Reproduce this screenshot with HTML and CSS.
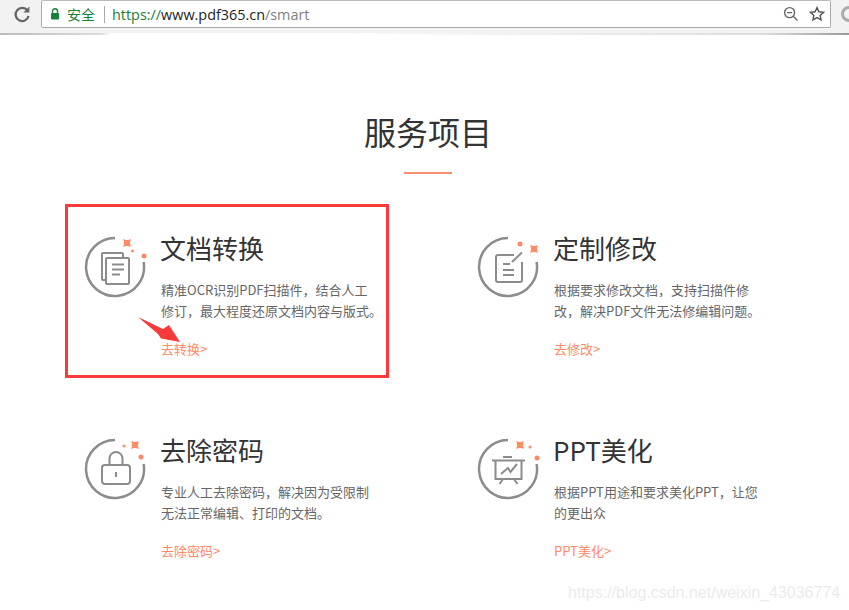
FILE: index.html
```html
<!DOCTYPE html>
<html lang="zh-CN">
<head>
    <meta charset="UTF-8">
    <meta name="viewport" content="width=device-width, initial-scale=1.0">
    <title>服务项目</title>
    <link rel="stylesheet" href="styles.css">
</head>
<body>
    <header class="toolbar">
        <svg class="nav-icon" width="41" height="28" viewBox="0 0 41 28">
            <path d="M-3 14h3" stroke="#777" stroke-width="2" fill="none"/>
            <path d="M27.500 10.500A6.600 6.600 0 1 0 28.600 16" stroke="#666" stroke-width="2.300" fill="none"/>
            <path d="M29.400 6.500v6h-6z" fill="#666"/>
        </svg>
        <div class="address">
            <svg class="lock" width="10" height="12" viewBox="0 0 10 12">
                <path d="M2.500 5V3.200a2.500 2.500 0 0 1 5 0V5" stroke="#188038" stroke-width="1.400" fill="none"/>
                <rect x="1" y="5" width="8" height="6.500" rx="1" fill="#188038"/>
            </svg>
            <span class="secure">安全</span>
            <span class="divider"></span>
            <span class="url"><span class="scheme">https://</span>www.pdf365.cn<span class="path">/smart</span></span>
            <svg class="addr-icon zoom-out" width="16" height="16" viewBox="0 0 16 16">
                <circle cx="6.600" cy="6.600" r="5" stroke="#666" stroke-width="1.400" fill="none"/>
                <path d="M4 6.600h5.200M10.300 10.300l4.200 4.200" stroke="#666" stroke-width="1.400" fill="none"/>
            </svg>
            <svg class="addr-icon" width="16" height="16" viewBox="0 0 16 16">
                <path d="M8 1.600l1.900 4.200 4.600.5-3.400 3.100 1 4.500L8 11.600l-4.100 2.300 1-4.500-3.400-3.100 4.600-.5z" stroke="#555" stroke-width="1.400" fill="none"/>
            </svg>
        </div>
        <span class="ext-icon"></span>
    </header>
    <div class="page-strip"></div>

    <main class="services">
        <h2 class="services-title">服务项目</h2>
        <div class="title-rule"></div>
        <div class="service-grid">
            <article class="service">
                <svg class="service-icon" width="64" height="64" viewBox="0 0 64 64">
                    <path class="ring" d="M32 4A29 29 0 1 0 60.600 28"/>
                    <path class="spark" d="M40 5Q44 7 48 5Q46 9 48 13Q44 11 40 13Q42 9 40 5z"/>
                    <circle class="spark" cx="49.500" cy="17" r="1.500"/>
                    <circle class="spark" cx="61" cy="22" r="2.500"/>
                    <path class="glyph" d="M23 46h-3a1 1 0 0 1-1-1V20a1 1 0 0 1 1-1h19a1 1 0 0 1 1 1v4"/>
                    <rect class="glyph" x="23" y="24" width="23" height="26" rx="1"/>
                    <path class="glyph" d="M29 30.500h12M29 35.500h12M29 40.500h8"/>
                </svg>
                <div class="service-body">
                    <h3>文档转换</h3>
                    <p>精准OCR识别PDF扫描件，结合人工<br>修订，最大程度还原文档内容与版式。</p>
                    <a href="#">去转换&gt;</a>
                </div>
            </article>
            <article class="service">
                <svg class="service-icon" width="64" height="64" viewBox="0 0 64 64">
                    <path class="ring" d="M32 4A29 29 0 1 0 60.600 28"/>
                    <circle class="spark" cx="44" cy="10" r="2.500"/>
                    <path class="spark" d="M54 11Q58 13 62 11Q60 15 62 19Q58 17 54 19Q56 15 54 11z"/>
                    <path class="glyph" d="M38 21H22a2 2 0 0 0-2 2v23a2 2 0 0 0 2 2h22a2 2 0 0 0 2-2V28"/>
                    <path class="glyph" d="M36 28l10-9.500M27 30h7M27 36h11M27 41h11"/>
                </svg>
                <div class="service-body">
                    <h3>定制修改</h3>
                    <p>根据要求修改文档，支持扫描件修<br>改，解决PDF文件无法修编辑问题。</p>
                    <a href="#">去修改&gt;</a>
                </div>
            </article>
            <article class="service">
                <svg class="service-icon" width="64" height="64" viewBox="0 0 64 64">
                    <path class="ring" d="M32 4A29 29 0 1 0 60.600 28"/>
                    <path class="spark" d="M48 5Q52 7 56 5Q54 9 56 13Q52 11 48 13Q50 9 48 5z"/>
                    <circle class="spark" cx="41" cy="10" r="1.500"/>
                    <circle class="spark" cx="58" cy="21" r="2.500"/>
                    <rect class="glyph" x="19" y="29" width="28" height="19" rx="3"/>
                    <path class="glyph" d="M26.500 29v-6.500a6.500 6.500 0 0 1 13 0V29M33 36v5"/>
                </svg>
                <div class="service-body">
                    <h3>去除密码</h3>
                    <p>专业人工去除密码，解决因为受限制<br>无法正常编辑、打印的文档。</p>
                    <a href="#">去除密码&gt;</a>
                </div>
            </article>
            <article class="service">
                <svg class="service-icon" width="64" height="64" viewBox="0 0 64 64">
                    <path class="ring" d="M32 4A29 29 0 1 0 60.600 28"/>
                    <path class="spark" d="M40 5Q44 7 48 5Q46 9 48 13Q44 11 40 13Q42 9 40 5z"/>
                    <circle class="spark" cx="54" cy="11" r="1.500"/>
                    <circle class="spark" cx="61" cy="22" r="2.500"/>
                    <path class="glyph" d="M16 24.500h33M27 21h9M19.500 24.500V43h26V24.500M27 43l-3.500 5M38 43l3.500 5"/>
                    <path class="glyph" d="M25 38l7-6 2.500 4 6.500-8"/>
                </svg>
                <div class="service-body">
                    <h3>PPT美化</h3>
                    <p>根据PPT用途和要求美化PPT，让您<br>的更出众</p>
                    <a href="#">PPT美化&gt;</a>
                </div>
            </article>
        </div>
    </main>

    <!-- annotations drawn on top of the screenshot -->
    <div class="mark-box"></div>
    <svg class="mark-arrow" width="48" height="34" viewBox="0 0 48 34">
        <path d="M0 2L25 14L31 10L42 27L23 23.500L20 19z" fill="#f83a3a"/>
    </svg>
    <span class="watermark">https://blog.csdn.net/weixin_43036774</span>
</body>
</html>
```

FILE: styles.css
```css
* {
    box-sizing: border-box;
}
html, body {
    height: 610px;
    overflow: hidden;
}
body {
    margin: 0;
    position: relative;
    background: #fff;
    font-family: "Noto Sans CJK SC", "Liberation Sans", sans-serif;
    color: #333;
}
.toolbar {
    display: flex;
    align-items: flex-start;
    height: 33px;
    background: #f2f2f2;
}
.nav-icon {
    flex: none;
}
.address {
    display: flex;
    flex: none;
    align-items: center;
    width: 790px;
    height: 28px;
    background: #fff;
    border: 1px solid #a9a9a9;
    border-top-color: #bbb;
    border-radius: 2px;
    padding: 0 5px 0 8px;
}
.secure {
    margin-left: 7px;
    font-size: 14px;
    color: #188038;
}
.divider {
    width: 1px;
    height: 17px;
    margin: 0 7px 0 9px;
    background: #aaa;
}
.url {
    flex: 1;
    font-family: "Open Sans", sans-serif;
    font-size: 14.400px;
    color: #222;
    white-space: nowrap;
}
.scheme {
    color: #188038;
}
.path {
    color: #808080;
}
.addr-icon {
    flex: none;
}
.zoom-out {
    margin-right: 10px;
}
.ext-icon {
    width: 16px;
    height: 16px;
    margin: 6px 0 0 10px;
    border: 3px solid #aaa;
    border-radius: 50%;
    flex: none;
}
.page-strip {
    height: 2px;
    background: linear-gradient(to right, #bbb, #ddd 12%, #fff 13%, #fff 40%, #ddd 90%, #999 100%);
}
.services {
    padding-top: 72px;
}
.services-title {
    margin: 0;
    text-align: center;
    font-size: 32px;
    font-weight: 400;
    line-height: 48px;
    color: #333;
    padding-left: 7px;
}
.title-rule {
    width: 48px;
    height: 2px;
    margin: 17px auto 0 404px;
    background: #f58e6e;
}
.service-grid {
    display: grid;
    grid-template-columns: 393px 393px;
    grid-auto-rows: 202px;
    margin: 60px 0 0 83px;
}
.service {
    display: flex;
    gap: 13px;
    align-items: flex-start;
}
.service-icon {
    flex: none;
}
.ring, .glyph {
    fill: none;
    stroke: #8c8c8c;
}
.ring {
    stroke-width: 2.500;
}
.glyph {
    stroke-width: 2;
}
.spark {
    fill: #ff8a66;
}
.service-body h3 {
    margin: -1px 0 0;
    font-size: 26px;
    font-weight: 400;
    line-height: 30px;
    color: #333;
}
.service-body p {
    margin: 16px 0 0;
    padding-left: 1px;
    font-size: 13px;
    line-height: 21px;
    color: #666;
}
.service-body a {
    display: block;
    margin-top: 17px;
    padding-left: 1px;
    font-size: 13px;
    line-height: 21px;
    color: #ff8a66;
    text-decoration: none;
}
.mark-box {
    position: absolute;
    left: 65px;
    top: 204px;
    width: 324px;
    height: 174px;
    border: 3px solid #f83a3a;
}
.mark-arrow {
    position: absolute;
    left: 138px;
    top: 315px;
}
.watermark {
    position: absolute;
    left: 568px;
    top: 584px;
    font-family: "Liberation Sans", sans-serif;
    font-size: 16px;
    color: #ebebeb;
    white-space: nowrap;
}
```
